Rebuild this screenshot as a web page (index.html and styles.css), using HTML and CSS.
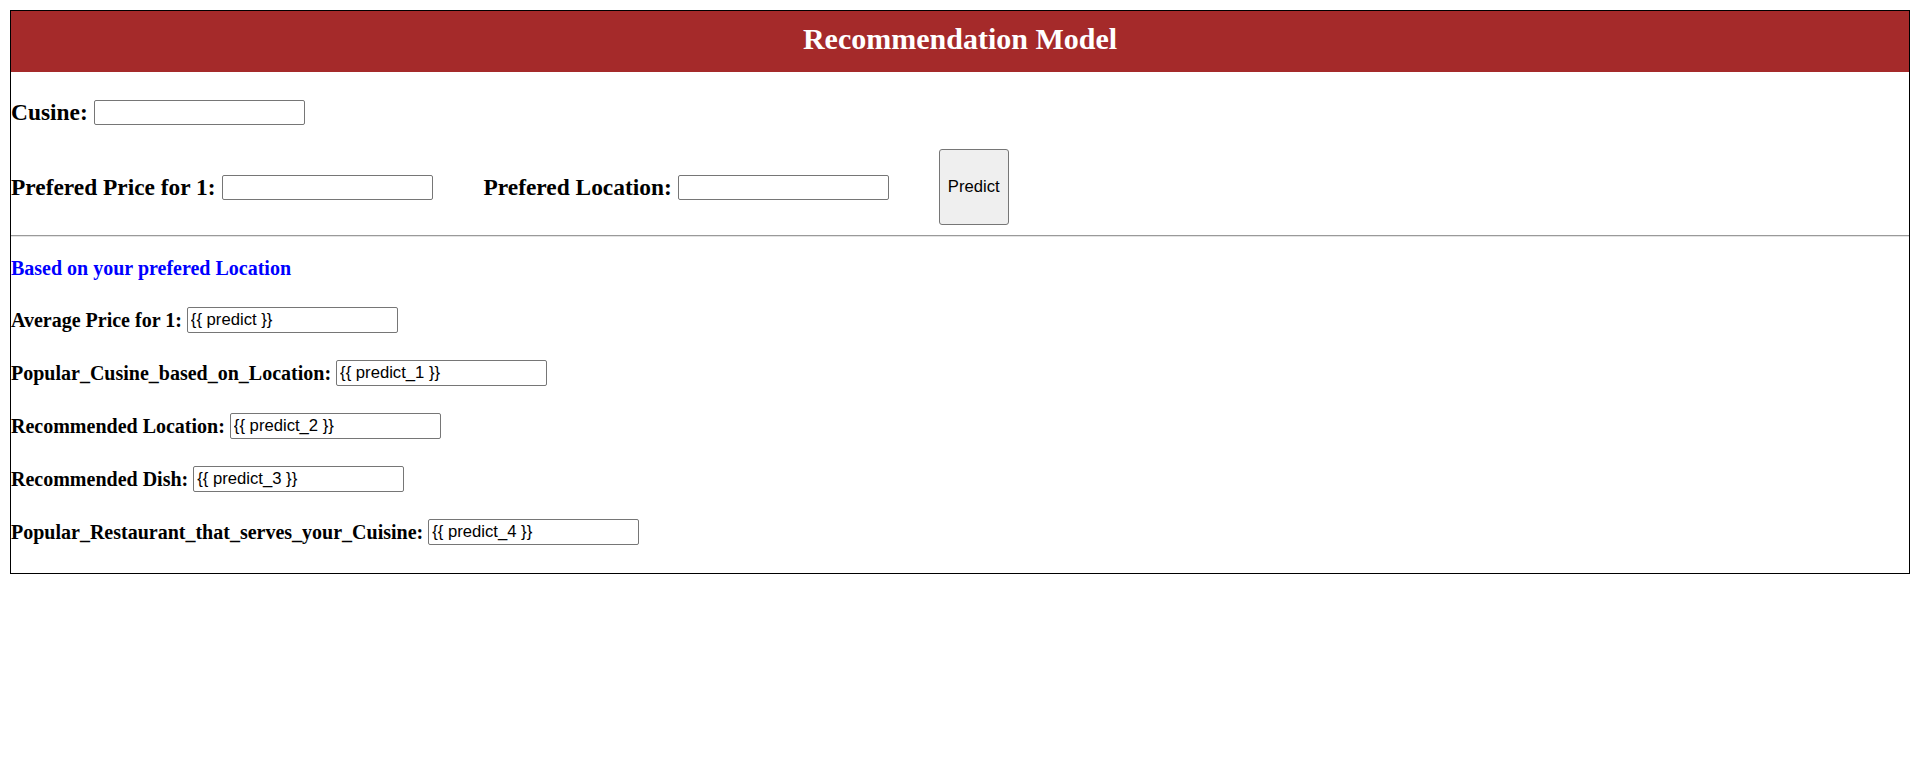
FILE: index.html
```html
<!DOCTYPE html>
<html lang="en">
<head>
<meta charset="utf-8">
<title>Recommendation Model</title>
<link rel="stylesheet" href="styles.css">
</head>
<body>
<div class="app">
  <header class="banner">
    <h1 class="title">Recommendation Model</h1>
  </header>
  <form class="form">
    <div class="row">
      <label class="field big">Cusine:<input class="box" type="text"></label>
    </div>
    <div class="row">
      <label class="field big">Prefered Price for 1:<input class="box" type="text"></label>
      <label class="field big loc">Prefered Location:<input class="box" type="text"></label>
      <button class="predict" type="button">Predict</button>
    </div>
  </form>
  <hr class="divider">
  <section class="results">
    <p class="note">Based on your prefered Location</p>
    <label class="field small">Average Price for 1:<input class="box tall" type="text" value="{{ predict }}"></label>
    <label class="field small">Popular_Cusine_based_on_Location:<input class="box tall" type="text" value="{{ predict_1 }}"></label>
    <label class="field small">Recommended Location:<input class="box tall" type="text" value="{{ predict_2 }}"></label>
    <label class="field small">Recommended Dish:<input class="box tall" type="text" value="{{ predict_3 }}"></label>
    <label class="field small">Popular_Restaurant_that_serves_your_Cuisine:<input class="box tall" type="text" value="{{ predict_4 }}"></label>
  </section>
</div>
</body>
</html>
```
FILE: styles.css
```css
html, body {
  background: #ffffff;
}
body {
  margin: 10px;
  font-family: "Liberation Serif", "Times New Roman", serif;
  color: #000;
}
.app {
  border: 1px solid #000;
}
.banner {
  box-sizing: border-box;
  height: 61px;
  padding-top: 11px;
  background: #a52a2a;
}
.title {
  margin: 0;
  font-size: 30px;
  line-height: 34px;
  font-weight: bold;
  color: #fff;
  text-align: center;
}
.form {
  display: flex;
  flex-direction: column;
  gap: 23px;
  padding: 27px 0 10px;
}
.row {
  display: flex;
  align-items: center;
}
.field {
  display: flex;
  align-items: center;
  font-weight: bold;
}
.big {
  font-size: 23.4px;
  gap: 6px;
}
.loc {
  margin-left: 51px;
}
.small {
  font-size: 20px;
  gap: 5px;
  height: 26px;
}
.box {
  box-sizing: border-box;
  width: 211px;
  height: 25px;
  margin: 0;
  padding: 0 3px;
  border: 1px solid #767676;
  border-radius: 2px;
  background: #fff;
  font-family: "Liberation Sans", Arial, sans-serif;
  font-size: 16.67px;
  color: #000;
}
.tall {
  height: 26px;
}
.predict {
  box-sizing: border-box;
  width: 70px;
  height: 76px;
  margin-left: 50px;
  padding: 0;
  border: 1px solid #767676;
  border-radius: 3px;
  background: #efefef;
  font-family: "Liberation Sans", Arial, sans-serif;
  font-size: 16.67px;
  color: #000;
}
.divider {
  margin: 0;
  height: 0;
  border: 0;
  border-top: 1px solid #9a9a9a;
  border-bottom: 1px solid #e4e4e4;
}
.results {
  display: flex;
  flex-direction: column;
  gap: 26px;
  padding: 18px 0 28px;
}
.results .field + .field {
  margin-top: 1px;
}
.note {
  margin: 0;
  height: 26px;
  line-height: 26px;
  font-size: 20px;
  font-weight: bold;
  color: #0000ff;
}
```
